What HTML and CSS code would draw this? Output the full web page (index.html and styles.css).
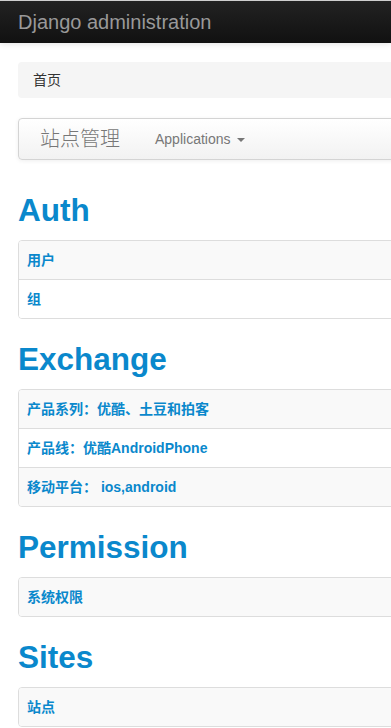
FILE: index.html
```html
<!DOCTYPE html>
<html lang="zh-CN">
<head>
<meta charset="utf-8">
<title>Django administration</title>
<link rel="stylesheet" href="styles.css">
</head>
<body>
<div class="page">
  <header class="topbar">
    <span class="topbar-brand">Django administration</span>
  </header>
  <div class="container">
    <div class="breadcrumb">首页</div>
    <nav class="navbar">
      <span class="navbar-brand">站点管理</span>
      <span class="navbar-item">Applications <span class="caret"></span></span>
    </nav>

    <section class="app">
      <h2 class="app-title">Auth</h2>
      <div class="model-list">
        <a class="model-row">用户</a>
        <a class="model-row">组</a>
      </div>
    </section>

    <section class="app">
      <h2 class="app-title">Exchange</h2>
      <div class="model-list">
        <a class="model-row">产品系列：优酷、土豆和拍客</a>
        <a class="model-row">产品线：优酷AndroidPhone</a>
        <a class="model-row">移动平台： ios,android</a>
      </div>
    </section>

    <section class="app">
      <h2 class="app-title">Permission</h2>
      <div class="model-list">
        <a class="model-row">系统权限</a>
      </div>
    </section>

    <section class="app">
      <h2 class="app-title">Sites</h2>
      <div class="model-list">
        <a class="model-row">站点</a>
      </div>
    </section>
  </div>
</div>
</body>
</html>
```
FILE: styles.css
```css
html, body {
  margin: 0;
  padding: 0;
  background: #fff;
}

body {
  font-family: "Liberation Sans", Arial, "Noto Sans CJK SC", sans-serif;
  font-size: 14px;
  line-height: 20px;
  color: #333;
}

.page {
  overflow: hidden;
}

.topbar {
  border-top: 1px solid #cfcfcf;
  height: 42px;
  background: linear-gradient(#222222, #111111);
  box-shadow: 0 1px 6px rgba(0, 0, 0, 0.12);
}

.topbar-brand {
  display: block;
  padding: 11px 18px 0;
  font-size: 20px;
  line-height: 20px;
  color: #999;
}

.container {
  width: 940px;
  margin-left: 18px;
  padding-top: 19px;
}

.breadcrumb {
  background: #f5f5f5;
  border-radius: 4px;
  padding: 8px 15px;
  margin-bottom: 20px;
  color: #333;
}

.navbar {
  display: flex;
  align-items: center;
  height: 40px;
  border: 1px solid #d4d4d4;
  border-radius: 4px;
  background: linear-gradient(#ffffff, #f2f2f2);
  box-shadow: 0 1px 4px rgba(0, 0, 0, 0.065);
  padding-left: 21px;
  margin-bottom: 30px;
}

.navbar-brand {
  font-size: 20px;
  line-height: 20px;
  color: #777;
  font-weight: 300;
  margin-right: 35px;
}

.navbar-item {
  display: flex;
  align-items: center;
  color: #777;
  font-size: 14px;
}

.caret {
  display: inline-block;
  width: 0;
  height: 0;
  margin-left: 6px;
  margin-top: 1px;
  border-top: 4px solid #777;
  border-left: 4px solid transparent;
  border-right: 4px solid transparent;
}

.app-title {
  margin: 10px 0;
  font-size: 31.5px;
  line-height: 40px;
  font-weight: bold;
  color: #0a88cc;
}

.model-list {
  border: 1px solid #ddd;
  border-radius: 4px;
  overflow: hidden;
  margin-bottom: 20px;
}

.model-row {
  display: block;
  padding: 9px 8px;
  line-height: 20px;
  font-size: 14px;
  font-weight: bold;
  color: #0a88cc;
  text-decoration: none;
  border-top: 1px solid #ddd;
  background: #fff;
}

.model-row:first-child {
  border-top: 0;
}

.model-row:nth-child(odd) {
  background: #f9f9f9;
}
```
